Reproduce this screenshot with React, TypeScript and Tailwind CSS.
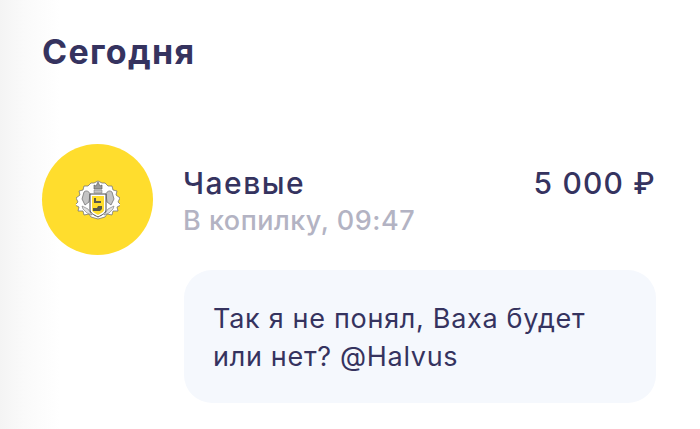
export default function App() {
  return (
    <div className="h-[429px] w-[700px] overflow-hidden bg-[linear-gradient(90deg,#f4f4f4_0px,#fafafa_25px,#ffffff_60px)] pl-[42px] pr-[44px] pt-[30px] font-['Inter','Noto_Sans',sans-serif] text-[#35335f]">
      <h1 className="m-0 text-[34px] font-bold leading-[44px] tracking-[1.3px]">Сегодня</h1>
      <div className="mt-[70px] flex items-start">
        <div className="flex h-[111px] w-[111px] shrink-0 items-center justify-center rounded-full bg-[#ffdd2d]">
          <svg width="44" height="42" viewBox="0 0 44 42">
            <path d="M22 2l4 2 3 0 3 3 4 0 1 4 4 1-1 4 4 3-2 4 3 3-4 2 1 4-5 0-1 4-5-1-2 3-7 2-7-2-2-3-5 1-1-4-5 0 1-4-4-2 3-3-2-4 4-3-1-4 4-1 1-4 4 0 3-3 3 0z" fill="#ffffff" stroke="#777777" strokeWidth="0.8" />
            <path d="M8 13c2-2 5-1 6 2l-1 8-4 3-3-6zM36 13c-2-2-5-1-6 2l1 8 4 3 3-6z" fill="#c4c4c4" stroke="#666666" strokeWidth="0.7" />
            <path d="M6 27l6 3 4 6-5-2-4-4zM38 27l-6 3-4 6 5-2 4-4z" fill="#e0e0e0" stroke="#777777" strokeWidth="0.6" />
            <path d="M18 10l0-4 2 1 2-4 2 4 2-1 0 4z" fill="#9a9a9a" stroke="#555555" strokeWidth="0.6" />
            <path d="M18 11h8v3h-8z" fill="#c4c4c4" stroke="#777777" strokeWidth="0.5" />
            <path d="M14 15h16v16c0 3-4 5-8 7-4-2-8-4-8-7z" fill="#ffffff" stroke="#4a4a4a" strokeWidth="1" />
            <path d="M16 17h12v14c0 2-3 3-6 5-3-2-6-3-6-5z" fill="#ffdd2d" />
            <path d="M18 19h2v3h5v2h-7zM17 29h4l1-2h4v3l-2 2h-7z" fill="#5a5a4a" />
          </svg>
        </div>
        <div className="ml-[30px] flex-1 pt-[20px]">
          <div className="flex items-start justify-between">
            <div className="text-[30px] font-[450] leading-[38px] tracking-[1.5px]">Чаевые</div>
            <div className="text-[30px] font-medium leading-[38px] tracking-[1.2px]">5 000 ₽</div>
          </div>
          <div className="text-[27px] font-medium leading-[38px] tracking-[0.5px] text-[#b3b3c3]">В копилку, 09:47</div>
          <div className="ml-px mt-[30px] rounded-[28px] bg-[#f5f8fd] pb-[27px] pl-[29px] pr-[40px] pt-[30px] text-[27px] leading-[38px] tracking-[0.7px]">
            Так я не понял, Ваха будет или нет? @Halvus
          </div>
        </div>
      </div>
    </div>
  );
}
